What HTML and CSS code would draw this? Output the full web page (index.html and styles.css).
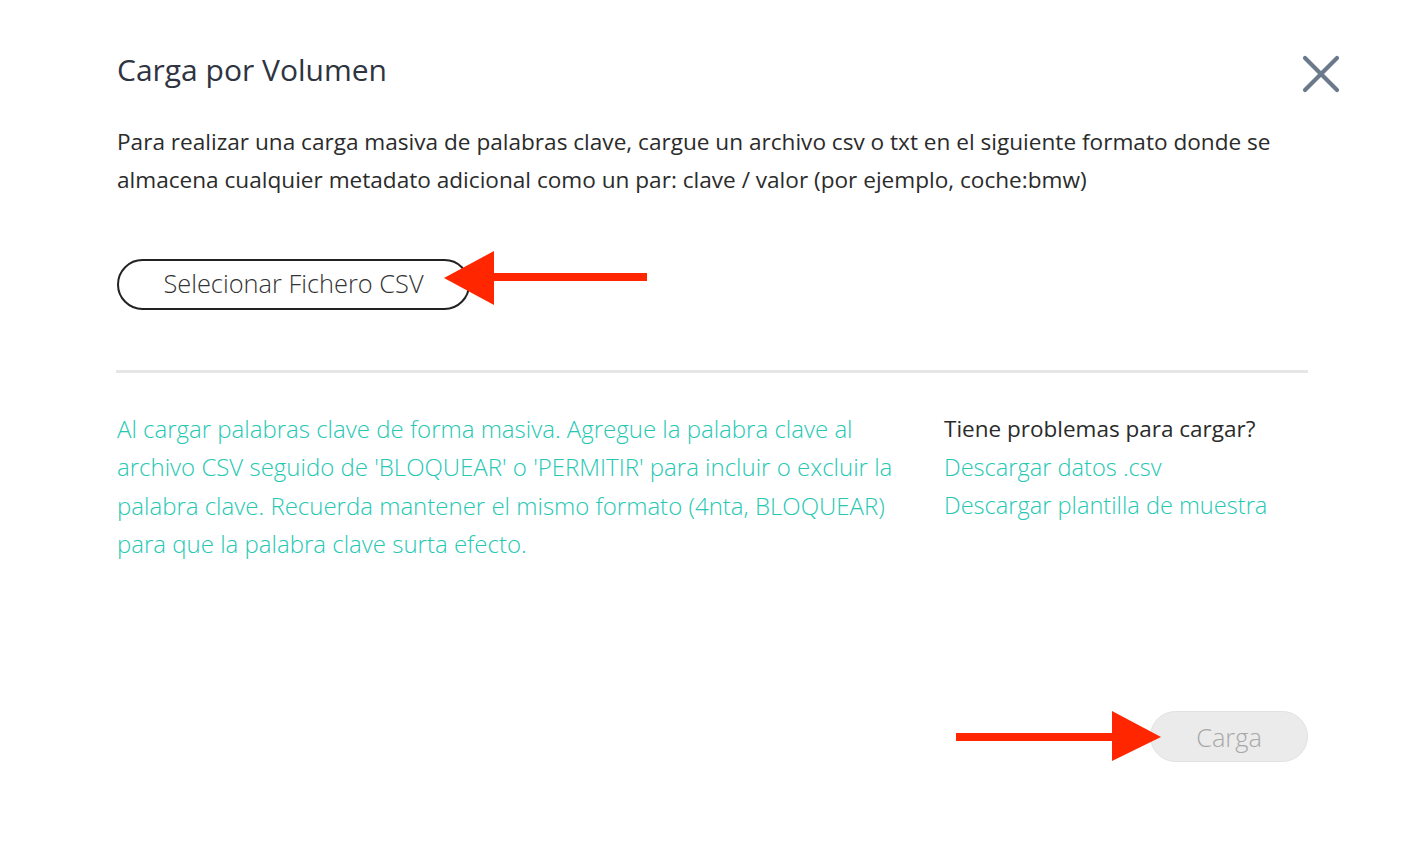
FILE: index.html
```html
<!DOCTYPE html>
<html lang="es">
<head>
<meta charset="utf-8">
<title>Carga por Volumen</title>
<link rel="stylesheet" href="styles.css">
</head>
<body>
<div class="modal">
  <header class="modal-header">
    <h1 class="modal-title">Carga por Volumen</h1>
    <button class="close-btn" aria-label="Cerrar">
      <svg width="38" height="38" viewBox="0 0 38 38"><path d="M3 3 L35 35 M35 3 L3 35" stroke="#6a7a8b" stroke-width="4.2" stroke-linecap="round"/></svg>
    </button>
  </header>
  <p class="intro">Para realizar una carga masiva de palabras clave, cargue un archivo csv o txt en el siguiente formato donde se<br>almacena cualquier metadato adicional como un par: clave / valor (por ejemplo, coche:bmw)</p>
  <div class="file-row">
    <button class="file-btn">Selecionar Fichero CSV</button>
    <svg class="arrow arrow-left" width="206" height="54" viewBox="0 0 206 54"><polygon points="0,27 50,0 50,54" fill="#ff2600"/><rect x="46" y="22" width="157" height="8" fill="#ff2600"/></svg>
  </div>
  <hr class="divider">
  <div class="info">
    <p class="info-text">Al cargar palabras clave de forma masiva. Agregue la palabra clave al<br>archivo CSV seguido de 'BLOQUEAR' o 'PERMITIR' para incluir o excluir la<br>palabra clave. Recuerda mantener el mismo formato (4nta, BLOQUEAR)<br>para que la palabra clave surta efecto.</p>
    <div class="help">
      <div class="help-title">Tiene problemas para cargar?</div>
      <a class="help-link" href="#">Descargar datos .csv</a>
      <a class="help-link" href="#">Descargar plantilla de muestra</a>
    </div>
  </div>
  <div class="footer">
    <svg class="arrow arrow-right" width="206" height="52" viewBox="0 0 206 52"><rect x="0" y="22" width="160" height="8" fill="#ff2600"/><polygon points="205,26 156,0 156,50" fill="#ff2600"/></svg>
    <button class="submit-btn" disabled>Carga</button>
  </div>
</div>
</body>
</html>
```
FILE: styles.css
```css
html, body {
  margin: 0;
  padding: 0;
  background: #ffffff;
}
body {
  font-family: "Open Sans", "Lato", sans-serif;
  color: #2b2b2b;
}
.modal {
  width: 1191px;
  margin-left: 117px;
  padding-top: 50px;
  position: relative;
}
.modal-header {
  display: flex;
  justify-content: space-between;
  align-items: center;
  margin-right: -32px;
  height: 40px;
}
.modal-title {
  margin: 0;
  font-size: 30px;
  font-weight: 400;
  color: #2e3440;
  line-height: 40px;
}
.close-btn {
  border: 0;
  background: none;
  padding: 0;
  width: 38px;
  height: 38px;
  margin-top: 8px;
  cursor: pointer;
}
.close-btn svg { display: block; }
.intro {
  margin: 33px 0 0;
  font-size: 22.6px;
  line-height: 38px;
  color: #2b2b2b;
}
.file-row {
  margin-top: 60px;
  display: flex;
  align-items: center;
  position: relative;
}
.file-btn {
  width: 353px;
  height: 51px;
  border: 2px solid #222;
  border-radius: 26px;
  background: #fff;
  font-family: inherit;
  font-size: 25.4px;
  font-weight: 300;
  color: #333;
  padding: 0 0 2px;
  line-height: 1;
}
.arrow {
  position: absolute;
}
.arrow-left {
  left: 327px;
  top: -8px;
}
.divider {
  margin: 60px 0 0 -1px;
  border: 0;
  height: 3px;
  background: #e6e6e6;
  width: 1192px;
}
.info {
  display: grid;
  grid-template-columns: 800px 1fr;
  column-gap: 27px;
  margin-top: 37px;
}
.info-text {
  margin: 0;
  font-size: 24px;
  line-height: 38.3px;
  font-weight: 300;
  color: #26c8b3;
  white-space: nowrap;
}
.help {
  display: flex;
  flex-direction: column;
  font-size: 22.5px;
  line-height: 38px;
  white-space: nowrap;
}
.help-title {
  color: #2b2b2b;
}
.help-link {
  color: #26c8b3;
  text-decoration: none;
  font-weight: 300;
  font-size: 23.6px;
}
.footer {
  margin-top: 148px;
  display: flex;
  justify-content: flex-end;
  position: relative;
}
.arrow-right {
  position: absolute;
  right: 146px;
  top: 0;
}
.submit-btn {
  width: 158px;
  height: 51px;
  border: 1px solid #e2e2e2;
  border-radius: 26px;
  background: #ebebeb;
  font-family: inherit;
  font-size: 25.4px;
  font-weight: 300;
  color: #a8a8a8;
  padding: 2px 0 0;
  line-height: 1;
}
```
